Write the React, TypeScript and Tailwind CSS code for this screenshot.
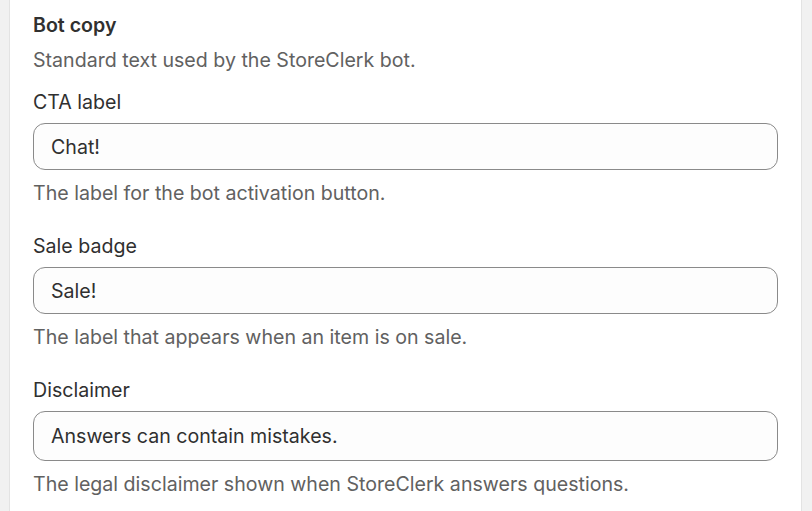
const fields = [
  { label: 'CTA label', value: 'Chat!', help: 'The label for the bot activation button.', h: 'h-[47px]' },
  { label: 'Sale badge', value: 'Sale!', help: 'The label that appears when an item is on sale.', h: 'h-[47px]' },
  { label: 'Disclaimer', value: 'Answers can contain mistakes.', help: 'The legal disclaimer shown when StoreClerk answers questions.', h: 'h-[50px]' },
];

export default function App() {
  return (
    <div className="h-[511px] w-[812px] overflow-hidden bg-[#f1f1f1] pl-[9px] pr-[10px] font-['Inter',sans-serif] text-[19.6px] leading-[24px] text-[#303030]">
      <div className="h-full border-x border-[#e3e3e3] bg-white px-[23px] pt-[13px]">
        <h2 className="font-semibold">Bot copy</h2>
        <p className="mt-[11px] text-[#616161]">Standard text used by the StoreClerk bot.</p>
        <div className="mt-[18px] flex flex-col gap-[29px]">
          {fields.map((f) => (
            <div key={f.label} className="flex flex-col">
              <label>{f.label}</label>
              <div
                className={`mt-[9px] flex ${f.h} items-center rounded-[12px] border border-[#8a8a8a] bg-[#fdfdfd] px-[17px]`}
              >
                {f.value}
              </div>
              <p className="mt-[11px] text-[#616161]">{f.help}</p>
            </div>
          ))}
        </div>
      </div>
    </div>
  );
}
